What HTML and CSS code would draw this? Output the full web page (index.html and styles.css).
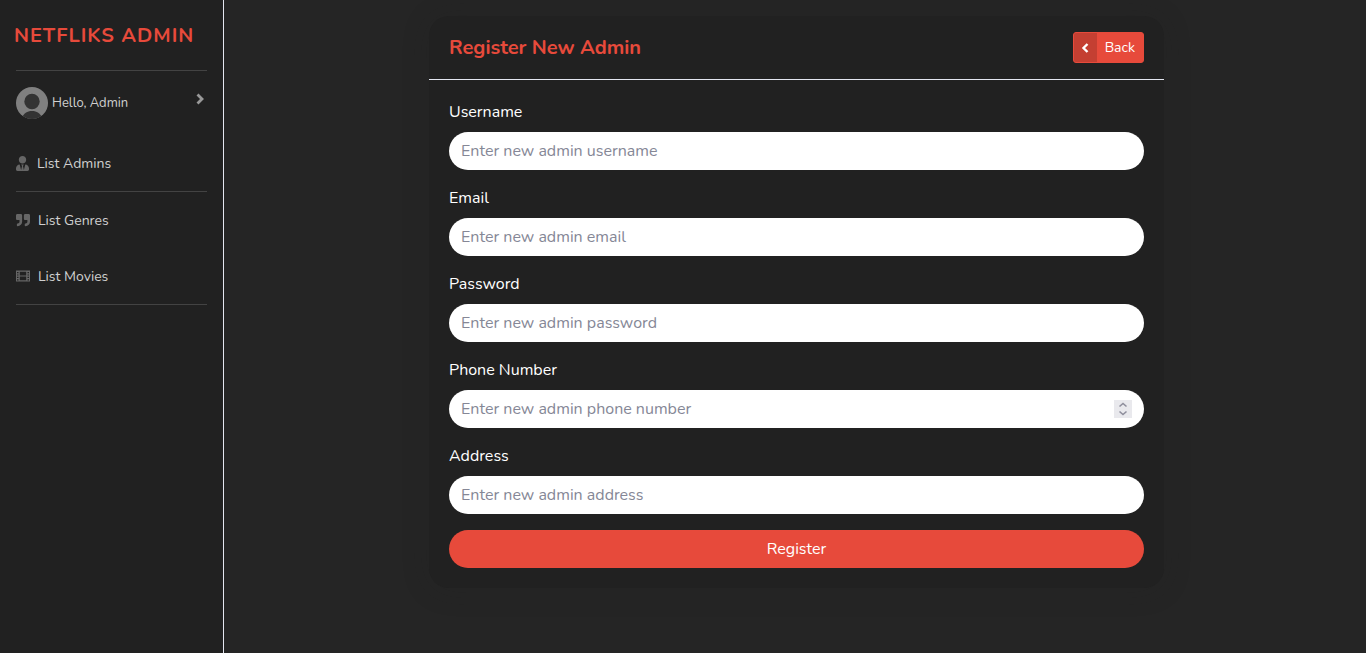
FILE: index.html
```html
<!DOCTYPE html>
<html lang="en">
<head>
<meta charset="utf-8">
<meta name="viewport" content="width=device-width, initial-scale=1">
<title>Netfliks Admin</title>
<link rel="stylesheet" href="styles.css">
</head>
<body>
<div class="layout">
  <nav class="sidebar">
    <a class="brand" href="#">NETFLIKS ADMIN</a>
    <hr class="divider">
    <a class="profile" href="#">
      <svg class="avatar" viewBox="0 0 32 32" aria-hidden="true"><defs><clipPath id="disc"><circle cx="16" cy="16" r="16"/></clipPath></defs><g clip-path="url(#disc)"><rect width="32" height="32" fill="#808080"/><circle cx="16" cy="14.5" r="7.7" fill="#333"/><path d="M5 32C8 26 11 24 16 24s8 2 11 8z" fill="#333"/></g></svg>
      <span>Hello, Admin</span>
      <svg class="caret" viewBox="0 0 8 12" aria-hidden="true"><path d="M1.500 1.500 6 6l-4.500 4.500" fill="none" stroke="currentColor" stroke-width="2.800"/></svg>
    </a>
    <a class="item" href="#">
      <svg class="icon icon-user" viewBox="0 0 448 512" aria-hidden="true"><path fill="currentColor" d="M224 256c70.700 0 128-57.300 128-128S294.700 0 224 0 96 57.300 96 128s57.300 128 128 128zm95.800 32.600L272 480l-32-136 32-56h-96l32 56-32 136-47.800-191.400C56.900 292 0 350.300 0 422.400V464c0 26.500 21.500 48 48 48h352c26.500 0 48-21.500 48-48v-41.600c0-72.100-56.900-130.400-128.200-133.800z"/></svg>
      <span class="item-text">List Admins</span>
    </a>
    <hr class="divider">
    <a class="item" href="#">
      <svg class="icon" viewBox="0 0 512 512" aria-hidden="true"><path fill="currentColor" d="M464 32H336c-26.500 0-48 21.500-48 48v128c0 26.500 21.500 48 48 48h80v64c0 35.300-28.700 64-64 64h-8c-13.300 0-24 10.700-24 24v48c0 13.300 10.700 24 24 24h8c88.400 0 160-71.600 160-160V80c0-26.500-21.500-48-48-48zm-288 0H48C21.500 32 0 53.500 0 80v128c0 26.500 21.500 48 48 48h80v64c0 35.300-28.700 64-64 64h-8c-13.300 0-24 10.700-24 24v48c0 13.300 10.700 24 24 24h8c88.400 0 160-71.600 160-160V80c0-26.500-21.500-48-48-48z"/></svg>
      <span class="item-text">List Genres</span>
    </a>
    <a class="item" href="#">
      <svg class="icon" viewBox="0 0 14 14" aria-hidden="true"><path fill="currentColor" fill-rule="evenodd" d="M0 1.500h14v11H0zM1 3v1.200h1.500V3zM1 5.400v1.200h1.500V5.400zM1 7.800V9h1.500V7.800zM1 10.200v1.200h1.500v-1.200zM11.500 3v1.200H13V3zM11.500 5.400v1.200H13V5.400zM11.500 7.800V9H13V7.800zM11.500 10.200v1.200H13v-1.200zM3.800 2.700v3.700h6.400V2.700zM3.800 7.600v3.700h6.400V7.600z"/></svg>
      <span class="item-text">List Movies</span>
    </a>
    <hr class="divider">
  </nav>
  <main class="content">
    <section class="card">
      <header class="card-header">
        <h1 class="card-title">Register New Admin</h1>
        <a class="back" href="#">
          <span class="back-icon"><svg viewBox="0 0 8 10" aria-hidden="true"><path d="M6.500 1 2.500 5l4 4" fill="none" stroke="currentColor" stroke-width="2.400"/></svg></span>
          <span class="back-text">Back</span>
        </a>
      </header>
      <form class="form">
        <div class="field"><label for="username">Username</label><input class="control" id="username" type="text" placeholder="Enter new admin username"></div>
        <div class="field"><label for="email">Email</label><input class="control" id="email" type="email" placeholder="Enter new admin email"></div>
        <div class="field"><label for="password">Password</label><input class="control" id="password" type="password" placeholder="Enter new admin password"></div>
        <div class="field"><label for="phone">Phone Number</label>
          <div class="number"><input class="control" id="phone" type="number" placeholder="Enter new admin phone number"><svg class="spinner" viewBox="0 0 18 18" aria-hidden="true"><path fill="#e9e9ed" d="M0 0h18v18H0z"/><path d="M5.500 6.500 9 3.500l3.500 3M5.500 11.500l3.500 3 3.500-3" fill="none" stroke="#8f8f9d" stroke-width="1.600"/></svg></div>
        </div>
        <div class="field"><label for="address">Address</label><input class="control" id="address" type="text" placeholder="Enter new admin address"></div>
        <button class="submit" type="submit">Register</button>
      </form>
    </section>
  </main>
</div>
</body>
</html>
```
FILE: styles.css
```css
* { box-sizing: border-box; }
body {
  margin: 0;
  background: #252525;
  color: #fff;
  font: 400 16px/24px Nunito, "Open Sans", sans-serif;
}
a { color: inherit; text-decoration: none; }
.layout { display: flex; min-height: 100vh; }
.sidebar {
  flex: none;
  width: 224px;
  background: #212121;
  border-right: 1px solid #e3e6f0;
  font-size: 14px;
  line-height: 20px;
  color: #d0d0d0;
}
.brand {
  display: flex;
  align-items: center;
  height: 70px;
  padding: 2px 14px 0;
  color: #e74a3b;
  font-size: 20px;
  font-weight: 700;
  letter-spacing: 1px;
  white-space: nowrap;
}
.divider { margin: 0 16px; border: 0; border-top: 1px solid #434343; }
.profile { display: flex; align-items: center; gap: 4px; height: 64px; padding: 0 16px; font-size: 13px; }
.avatar { width: 32px; height: 32px; }
.caret { width: 8px; height: 12px; margin: 0 3px 8px auto; color: #999; }
.item { display: flex; align-items: center; gap: 8px; height: 56px; padding: 0 16px; }
.item-text { padding-top: 2px; }
.icon { width: 14px; height: 14px; color: #666; }
.icon-user { width: 13px; height: 15px; }
.content { flex: 1; padding: 16px 202px 65px 205px; }
.card { background: #212121; border-radius: 20px; box-shadow: 0 2px 28px rgba(33, 33, 33, .2); }
.card-header {
  display: flex;
  justify-content: space-between;
  align-items: center;
  height: 64px;
  padding: 0 20px;
  border-bottom: 1px solid #e3e6f0;
}
.card-title { margin: 0; color: #e74a3b; font-size: 20px; line-height: 24px; font-weight: 700; }
.back {
  display: flex;
  height: 31px;
  border: 1px solid #e74a3b;
  border-radius: 3px;
  background: #e74a3b;
  font-size: 14px;
  line-height: 29px;
  overflow: hidden;
}
.back-icon { display: flex; align-items: center; justify-content: center; width: 23px; background: rgba(0, 0, 0, .15); }
.back-icon svg { width: 8px; height: 10px; }
.back-text { padding: 0 8px; }
.form { display: grid; gap: 16px; padding: 20px; }
.field { display: grid; gap: 8px; }
.control {
  display: block;
  width: 100%;
  height: 38px;
  padding: 0 12px;
  border: 0;
  border-radius: 19px;
  background: #fff;
  color: #6e707e;
  font: inherit;
  appearance: textfield;
}
.control::placeholder { color: #858796; opacity: 1; }
.control::-webkit-inner-spin-button { display: none; }
.number { position: relative; }
.spinner { position: absolute; top: 10px; right: 12px; width: 18px; height: 18px; }
.submit { height: 38px; border: 0; border-radius: 19px; background: #e74a3b; color: #fff; font: inherit; }
```
